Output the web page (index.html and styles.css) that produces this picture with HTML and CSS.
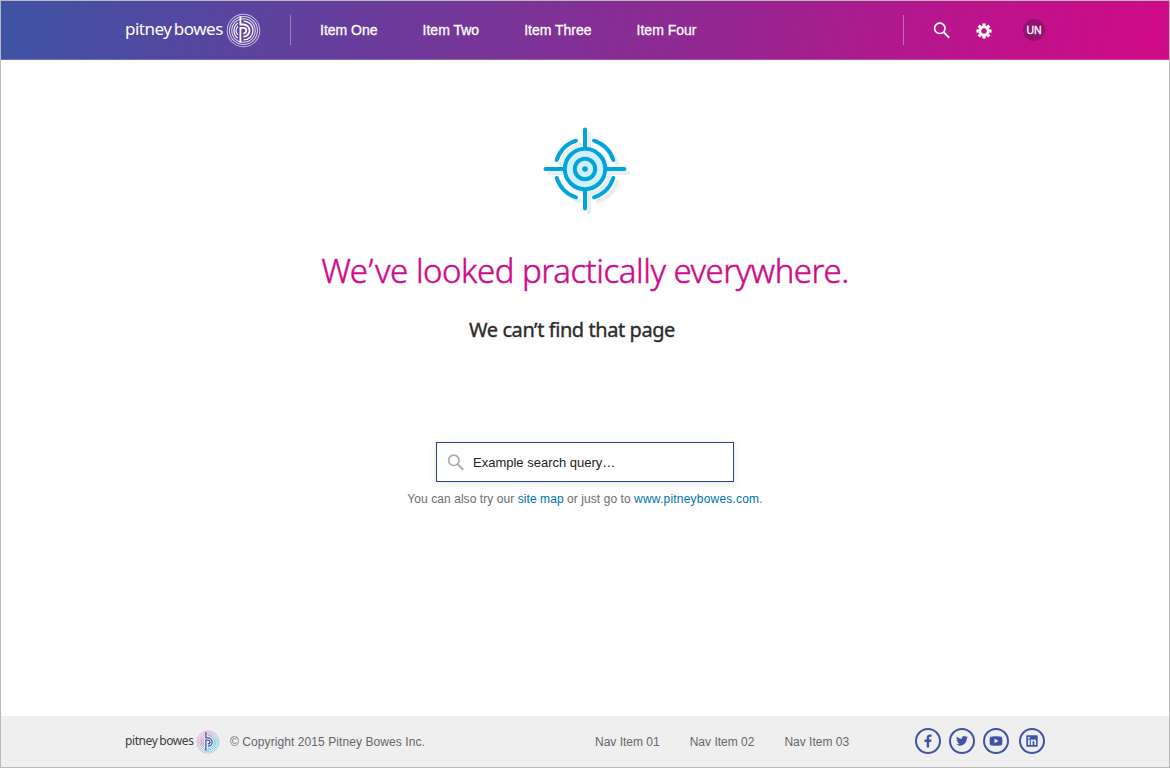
FILE: index.html
```html
<!DOCTYPE html>
<html lang="en">
<head>
<meta charset="utf-8">
<title>Page not found</title>
<link rel="stylesheet" href="styles.css">
</head>
<body>
<svg class="defs" width="0" height="0" aria-hidden="true">
  <defs>
    <linearGradient id="tint" x1="0" y1="0" x2="1" y2="1"><stop offset="0.2" stop-color="#d979b8"/><stop offset="0.55" stop-color="#7b9cd6"/><stop offset="0.8" stop-color="#3bc4ee"/></linearGradient>
    <symbol id="rings" viewBox="0 0 34 34">
      <g fill="none" stroke-width="1">
        <circle cx="17" cy="17" r="15.8" opacity=".65"/>
        <circle cx="17" cy="17" r="13.6" opacity=".75"/>
        <circle cx="17" cy="17" r="11.4" opacity=".85"/>
        <path d="M11.5 9.6a9.2 9.2 0 0 0 0 14.8M17 7.8a9.2 9.2 0 0 1 0 18.4" stroke-width="1.2"/>
        <path d="M11.5 12.7a7 7 0 0 0 0 8.6" stroke-width="1.2"/>
      </g>
    </symbol>
    <symbol id="pb" viewBox="0 0 34 34">
      <path d="M14 3.2V11.2H17A5.9 5.9 0 0 1 17 23H16.8M14 29V14.4H17A2.7 2.7 0 0 1 17 19.8H16.8" fill="none" stroke-width="1.8"/>
    </symbol>
    <symbol id="search" viewBox="0 0 18 18">
      <circle cx="6.8" cy="6.3" r="5.2" fill="none" stroke="currentColor" stroke-width="1.7"/>
      <path d="M10.6 10.1L16.2 15.8" fill="none" stroke="currentColor" stroke-width="2"/>
    </symbol>
  </defs>
</svg>
<div class="page">
  <header class="header">
    <div class="brand">
      <span class="wordmark">pitney bowes</span>
      <svg class="mark" width="35" height="35" stroke="#fff"><use href="#rings"/><use href="#pb"/></svg>
    </div>
    <nav class="nav"><a>Item One</a><a>Item Two</a><a>Item Three</a><a>Item Four</a></nav>
    <div class="tools">
      <svg class="tool-search" width="18" height="18"><use href="#search"/></svg>
      <svg class="gear" width="16" height="16" viewBox="-8 -8 16 16">
        <circle r="4.1" fill="none" stroke="#fff" stroke-width="2.8"/>
        <g fill="#fff"><path id="tooth" d="M-1.6-7.6H1.6V-5H-1.6Z"/><use href="#tooth" transform="rotate(45)"/><use href="#tooth" transform="rotate(90)"/><use href="#tooth" transform="rotate(135)"/><use href="#tooth" transform="rotate(180)"/><use href="#tooth" transform="rotate(225)"/><use href="#tooth" transform="rotate(270)"/><use href="#tooth" transform="rotate(315)"/></g>
      </svg>
      <span class="avatar">UN</span>
    </div>
  </header>
  <main class="main">
    <svg class="target" width="96" height="96" viewBox="-48 -48 96 96" fill="none" stroke-width="4" stroke-linecap="round">
      <g stroke="#e9ecf0" transform="translate(4 4)">
        <path d="M-39.5 0H-22M22 0H39.5M0-39.5V-22M0 22V39.5M-28.3-9A30 30 0 0 1-9-28.3M9-28.3A30 30 0 0 1 28.3-9M28.3 9A30 30 0 0 1 9 28.3M-9 28.3A30 30 0 0 1-28.3 9"/><circle r="20.2"/>
      </g>
      <g stroke="#00a5dd">
        <path d="M-39.5 0H-22M22 0H39.5M0-39.5V-22M0 22V39.5M-28.3-9A30 30 0 0 1-9-28.3M9-28.3A30 30 0 0 1 28.3-9M28.3 9A30 30 0 0 1 9 28.3M-9 28.3A30 30 0 0 1-28.3 9"/>
        <circle r="20.2" fill="#d4effc"/><circle r="10.2"/><circle r="2.8" fill="#00a5dd" stroke="none"/>
      </g>
    </svg>
    <h1 class="title">We<span class="apos">’</span>ve looked practically everywhere.</h1>
    <h2 class="subtitle">We can’t find that page</h2>
    <div class="field"><svg width="18" height="18"><use href="#search"/></svg><span>Example search query…</span></div>
    <p class="hint">You can also try our <a>site map</a> or just go to <a class="site">www.pitneybowes.com</a>.</p>
  </main>
  <footer class="footer">
    <span class="wordmark small">pitney bowes</span>
    <svg class="foot-mark" width="24" height="24"><use href="#rings" stroke="url(#tint)"/><use href="#pb" stroke="#3e53a4"/></svg>
    <span class="copy">© Copyright 2015 Pitney Bowes Inc.</span>
    <nav class="foot-nav"><a>Nav Item 01</a><a>Nav Item 02</a><a>Nav Item 03</a></nav>
    <div class="social">
      <svg viewBox="-13 -13 26 26"><circle r="12"/><path d="M-1.3 6.6V.9H-3.5V-1.5H-1.3V-3.2C-1.3-5.5 0-6.6 1.9-6.6L3.6-6.5V-4.3H2.5C1.4-4.3 1.1-3.8 1.1-3V-1.5H3.5L3.1.9H1.1V6.6Z"/></svg>
      <svg viewBox="-13 -13 26 26"><circle r="12"/><path transform="translate(-5.8 -6.2) scale(.49)" d="M23.6 4.9a9.7 9.7 0 0 1-2.8.8 4.9 4.9 0 0 0 2.1-2.7 9.9 9.9 0 0 1-3.1 1.2 4.9 4.9 0 0 0-8.4 4.5A14 14 0 0 1 1.3 3.5a4.9 4.9 0 0 0 1.5 6.6 4.9 4.9 0 0 1-2.2-.6 4.9 4.9 0 0 0 3.9 4.9 5 5 0 0 1-2.2.1 4.9 4.9 0 0 0 4.6 3.4A9.9 9.9 0 0 1 0 20a13.9 13.9 0 0 0 7.5 2.1c9.1 0 14.3-7.7 14-14.6a10 10 0 0 0 2.1-2.6z"/></svg>
      <svg viewBox="-13 -13 26 26"><circle r="12"/><path fill-rule="evenodd" d="M-4-4.6Q0-5 4-4.6Q6-4.5 6.2-3Q6.6 0 6.2 3Q6 4.5 4 4.6Q0 5-4 4.6Q-6 4.5-6.2 3Q-6.6 0-6.2-3Q-6-4.5-4-4.6ZM-1.5-2.4V2.2L2.5-.1Z"/></svg>
      <svg class="last" viewBox="-13 -13 26 26"><circle r="12"/><path fill-rule="evenodd" d="M-5-5.7H5Q5.7-5.7 5.7-5V5Q5.7 5.7 5 5.7H-5Q-5.7 5.7-5.7 5V-5Q-5.7-5.7-5-5.7ZM-4-1.4V4H-2.3V-1.4ZM-4.1-4V-2.4H-2.2V-4ZM-1.1-1.4V4H.6V1.2C.6-.5 2.4-.4 2.4 1V4H4.1V.6C4.1-2 1.5-2 .6-.6V-1.4Z"/></svg>
    </div>
  </footer>
</div>
</body>
</html>
```
FILE: styles.css
```css
* { box-sizing: border-box; }
body { margin: 0; font-family: "Liberation Sans", Arial, sans-serif; background: #fff; }
.defs { display: block; height: 0; }
.page { width: 1170px; height: 768px; border: 1px solid #b9b9b9; display: flex; flex-direction: column; overflow: hidden; }
.header { height: 59px; flex: none; display: flex; align-items: center; padding: 0 124px; background: linear-gradient(100deg, #3e53a4 0%, #633f9d 27%, #942691 62%, #b8158d 80%, #d00a87 100%); border-bottom: 1px solid rgba(255, 255, 255, .2); color: #fff; }
.brand { display: flex; align-items: center; width: 166px; height: 30px; border-right: 1px solid rgba(255, 255, 255, .35); }
.brand svg { flex: none; }
.wordmark { width: 101px; flex: none; padding-bottom: 2px; font-family: "Noto Sans", sans-serif; font-size: 17px; line-height: 30px; letter-spacing: -.5px; word-spacing: -1.5px; white-space: nowrap; }
.wordmark.small { width: 69px; font-size: 12px; letter-spacing: -.4px; word-spacing: -1px; color: #3c3c3c; }
.nav { display: flex; gap: 45px; margin-left: 29px; font-size: 14px; -webkit-text-stroke: .3px #fff; }
.nav a { white-space: nowrap; }
.tools { display: flex; align-items: center; margin-left: auto; height: 30px; width: 142px; border-left: 1px solid rgba(255, 255, 255, .35); padding-left: 29px; }
.tool-search { margin-top: 2px; }
.gear { margin: 1px 0 0 25px; }
.avatar { width: 22px; height: 22px; margin-left: 31px; flex: none; border-radius: 50%; background: #91136f; font-size: 10.5px; -webkit-text-stroke: .3px #fff; line-height: 22px; text-align: center; }
.main { flex: 1; display: flex; flex-direction: column; align-items: center; }
.target { margin-top: 61px; flex: none; }
.title { margin: 29px 0 0; font: 300 33px/50px "Noto Sans", sans-serif; letter-spacing: -.48px; -webkit-text-stroke: .45px #cf0989; color: #cf0989; white-space: nowrap; }
.apos { margin: 0 2px 0 1px; }
.subtitle { margin: 19px 26px 0 0; font: 400 20px/30px "Noto Sans", sans-serif; letter-spacing: -.43px; -webkit-text-stroke: .35px #2b2b2b; color: #2b2b2b; white-space: nowrap; }
.field { width: 298px; height: 40px; margin-top: 97px; flex: none; border: 1px solid #2e4289; box-shadow: 0 2px 8px rgba(0, 0, 0, .1); display: flex; align-items: center; padding-left: 10px; gap: 8px; font-size: 13px; color: #222; }
.field svg { color: #aaa; margin-top: 2px; }
.hint { margin: 9px 0 0; font-size: 12px; line-height: 16px; letter-spacing: .07px; color: #6b6b6b; white-space: nowrap; }
.hint a { color: #0072b0; }
.hint .site { letter-spacing: .2px; }
.footer { height: 51px; flex: none; background: #efefef; display: flex; align-items: center; padding: 0 124px; font-size: 12px; color: #666; }
.foot-mark { margin-left: 2px; }
.copy { margin-left: 10px; width: 365px; letter-spacing: .08px; white-space: nowrap; }
.foot-nav { display: flex; gap: 30px; white-space: nowrap; }
.social { display: flex; gap: 8px; margin: 0 0 2px auto; }
.social svg { width: 26px; height: 26px; fill: #3e53a4; }
.social circle { fill: none; stroke: #3e53a4; stroke-width: 2; }
.social .last { margin-left: 2px; }
```
